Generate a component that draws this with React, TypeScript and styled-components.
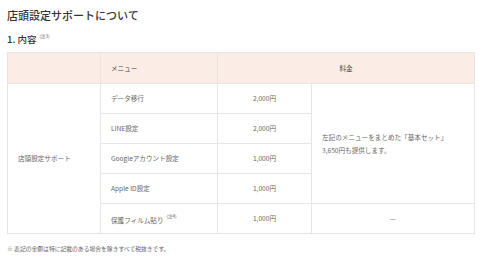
import styled, { createGlobalStyle } from "styled-components";

const GlobalStyle = createGlobalStyle`
  body {
    margin: 0;
    background-color: #fff;
    font-family: "Noto Sans CJK JP", "Noto Sans", sans-serif;
    color: #333;
  }
`;

const WrapperSupport = styled.div`
  padding: 8px 7px 0 7px;
  width: 467px;
`;

const TitleSection = styled.h2`
  margin: 0;
  font-size: 11px;
  line-height: 15px;
  font-weight: 500;
  color: #333;
`;

const TitleContent = styled.h3`
  margin: 6px 0 0 0;
  font-size: 9.5px;
  line-height: 14px;
  font-weight: 500;
  color: #333;
`;

const Note = styled.sup`
  font-size: 4.5px;
  font-weight: 400;
  margin-left: 3px;
  vertical-align: 5px;
  color: #555;
`;

const TablePrice = styled.table`
  margin-top: 6px;
  width: 467px;
  border-collapse: collapse;
  table-layout: fixed;
  font-size: 6.6px;
  color: #666;
`;

const CellHead = styled.th<{ $align?: string }>`
  background-color: #fbede6;
  border: 1px solid #e6e6e6;
  height: 30px;
  padding: 0 10px;
  font-weight: 400;
  color: #444;
  text-align: ${(p) => p.$align || "left"};
`;

const Cell = styled.td<{ $align?: string }>`
  border: 1px solid #e6e6e6;
  height: 29px;
  padding: 0 10px;
  line-height: 12.5px;
  text-align: ${(p) => p.$align || "left"};
  vertical-align: middle;
`;

const Footnote = styled.p`
  margin: 10px 0 0 0;
  font-size: 5.8px;
  color: #666;
`;

const rows = [
  { menu: "データ移行", price: "2,000円" },
  { menu: "LINE設定", price: "2,000円" },
  { menu: "Googleアカウント設定", price: "1,000円" },
  { menu: "Apple ID設定", price: "1,000円" },
];

export default function App() {
  return (
    <>
      <GlobalStyle />
      <WrapperSupport>
        <TitleSection>店頭設定サポートについて</TitleSection>
        <TitleContent>
          1. 内容<Note>(注3)</Note>
        </TitleContent>
        <TablePrice>
          <colgroup>
            <col style={{ width: 93 }} />
            <col style={{ width: 117 }} />
            <col style={{ width: 94 }} />
            <col style={{ width: 163 }} />
          </colgroup>
          <thead>
            <tr>
              <CellHead></CellHead>
              <CellHead>メニュー</CellHead>
              <CellHead colSpan={2} $align="center">
                料金
              </CellHead>
            </tr>
          </thead>
          <tbody>
            {rows.map((row, i) => (
              <tr key={row.menu}>
                {i === 0 && <Cell rowSpan={5}>店頭設定サポート</Cell>}
                <Cell>{row.menu}</Cell>
                <Cell $align="center">{row.price}</Cell>
                {i === 0 && (
                  <Cell rowSpan={4}>
                    左記のメニューをまとめた「基本セット」
                    <br />
                    3,650円も提供します。
                  </Cell>
                )}
              </tr>
            ))}
            <tr>
              <Cell>
                保護フィルム貼り<Note>(注4)</Note>
              </Cell>
              <Cell $align="center">1,000円</Cell>
              <Cell $align="center">—</Cell>
            </tr>
          </tbody>
        </TablePrice>
        <Footnote>※ 表記の金額は特に記載のある場合を除きすべて税抜きです。</Footnote>
      </WrapperSupport>
    </>
  );
}
